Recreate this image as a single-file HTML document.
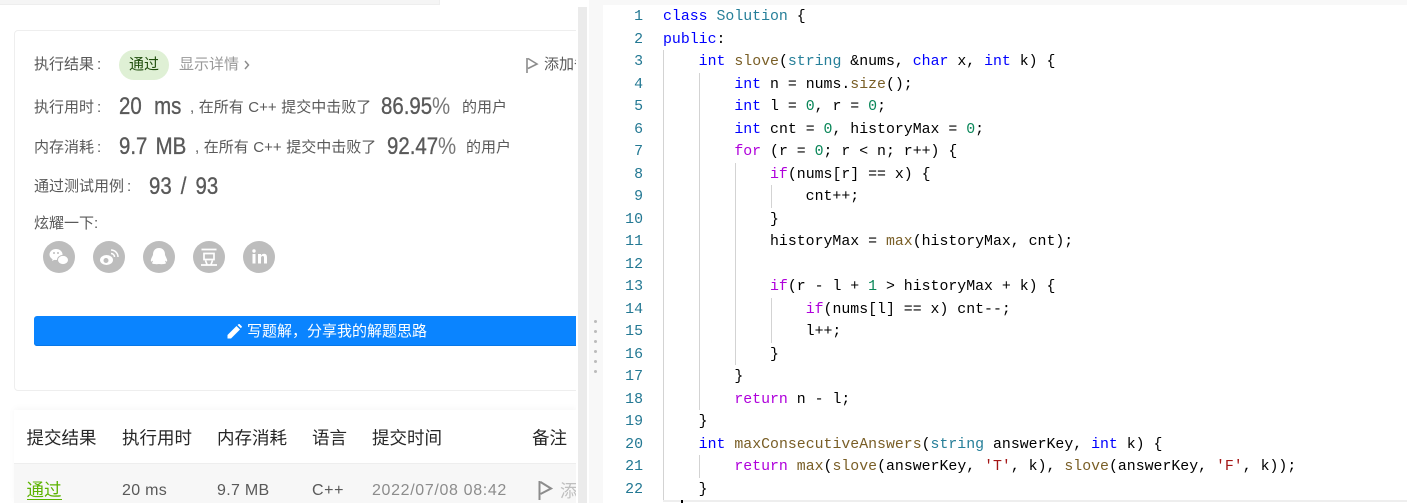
<!DOCTYPE html>
<html><head><meta charset="utf-8"><style>
html,body{margin:0;padding:0;background:#fff;}
body{width:1407px;height:503px;overflow:hidden;position:relative;font-family:"Liberation Sans","Noto Sans CJK SC",sans-serif;}
.a{position:absolute;white-space:pre;}
#left{position:absolute;left:0;top:0;width:576px;height:503px;overflow:hidden;}
.l{font-size:15px;color:#595959;line-height:20px;word-spacing:.4px;}
.n{font-size:24px;color:#595959;line-height:28px;transform:scaleX(.85);transform-origin:0 50%;-webkit-text-stroke:.35px #595959;}
.n i{font-style:normal;color:#777;-webkit-text-stroke:0;}
.h{font-size:17.5px;color:#262626;line-height:26px;}
.r{font-size:16px;color:#595959;line-height:24px;letter-spacing:.3px;}
.c{position:absolute;left:663px;margin-top:1px;font:14.87px/22px "Liberation Mono",monospace;color:#000;white-space:pre;}
.g{position:absolute;left:627px;margin-top:1px;width:16px;text-align:right;font:14.87px/22px "Liberation Mono",monospace;color:#237893;}
.i{position:absolute;width:1px;background:#d3d3d3;}
b{font-weight:normal;}
.k{color:#00f}.t{color:#267f99}.f{color:#795e26}.p{color:#af00db}.o{color:#098658}.s{color:#a31515}
.ic{position:absolute;top:241px;width:32px;height:32px;border-radius:50%;background:#bdbdbd;}
</style></head><body>
<div id="left">
<div class="a" style="left:0;top:0;width:439px;height:4px;background:#f5f5f5;border-right:1px solid #eee;border-bottom:1px solid #eee"></div>
<div class="a" style="left:14px;top:30px;width:600px;height:359px;border:1px solid #eee;border-radius:4px;box-sizing:content-box"></div>

<div class="a l" style="left:34px;top:55px">执行结果<span style="margin-left:3px">:</span></div>
<div class="a" style="left:119px;top:50px;width:50px;height:30px;border-radius:15px;background:#dff0d5"></div>
<div class="a" style="left:129px;top:55px;font-size:15px;line-height:20px;color:#1f4d0c">通过</div>
<div class="a" style="left:179px;top:55px;font-size:15px;line-height:20px;color:#999">显示详情</div>
<svg class="a" style="left:244px;top:60px" width="6" height="10" viewBox="0 0 6 10"><path d="M1 1L4.500 5L1 9" fill="none" stroke="#8c8c8c" stroke-width="1.500"/></svg>
<svg class="a" style="left:526px;top:57px" width="13" height="16" viewBox="0 0 13 16"><path d="M1 1V16M2 1.500L11 7L2 11.500" fill="none" stroke="#8c8c8c" stroke-width="1.600"/></svg>
<div class="a l" style="left:544px;top:55px">添加备注</div>

<div class="a l" style="left:34px;top:98px">执行用时<span style="margin-left:3px">:</span></div>
<div class="a n" style="left:119px;top:93px;word-spacing:8px">20 ms</div>
<div class="a l" style="left:190px;top:98px">, 在所有 C++ 提交中击败了</div>
<div class="a n" style="left:381px;top:93px">86.95<i>%</i></div>
<div class="a l" style="left:462px;top:98px">的用户</div>

<div class="a l" style="left:34px;top:138px">内存消耗<span style="margin-left:3px">:</span></div>
<div class="a n" style="left:119px;top:133px;word-spacing:3px">9.7 MB</div>
<div class="a l" style="left:195px;top:138px">, 在所有 C++ 提交中击败了</div>
<div class="a n" style="left:387px;top:133px">92.47<i>%</i></div>
<div class="a l" style="left:466px;top:138px">的用户</div>

<div class="a l" style="left:34px;top:177px">通过测试用例<span style="margin-left:3px">:</span></div>
<div class="a n" style="left:149px;top:173px;word-spacing:4px">93 / 93</div>
<div class="a l" style="left:34px;top:214px">炫耀一下:</div>

<div class="ic" style="left:43px"><svg width="32" height="32" viewBox="0 0 32 32"><ellipse cx="13" cy="13.500" rx="6.500" ry="5.500" fill="#fff"/><path d="M10 17l-1 3 4-2z" fill="#fff"/><ellipse cx="20" cy="19" rx="5.500" ry="4.600" fill="#fff" stroke="#bdbdbd"/><circle cx="11" cy="12" r="1" fill="#bdbdbd"/><circle cx="15" cy="12" r="1" fill="#bdbdbd"/></svg></div>
<div class="ic" style="left:93px"><svg width="32" height="32" viewBox="0 0 32 32"><ellipse cx="13.500" cy="19" rx="6.500" ry="5" fill="#fff"/><circle cx="13" cy="19.500" r="2.500" fill="#bdbdbd"/><path d="M18 9a7 7 0 0 1 7 7M18 12.500a3.500 3.500 0 0 1 3.500 3.500" fill="none" stroke="#fff" stroke-width="1.500"/></svg></div>
<div class="ic" style="left:143px"><svg width="32" height="32" viewBox="0 0 32 32"><path d="M16 7c4 0 6 3 6 6.500 0 1 1 2 2 5 .6 2.200-.5 2.800-2 1 0 1.500 1 2 1 2.500 0 1-4 1.500-7 1-3 .5-7 0-7-1 0-.5 1-1 1-2.500-1.500 1.800-2.600 1.200-2-1 1-3 2-4 2-5C10 10 12 7 16 7z" fill="#fff"/></svg></div>
<div class="ic" style="left:193px"><svg width="32" height="32" viewBox="0 0 32 32"><path d="M8.500 8.500h15M11 12.500h10v6H11zM12.500 19.500l1.500 4M19.500 19.500l-1.500 4M8 24h16" fill="none" stroke="#fff" stroke-width="1.700"/></svg></div>
<div class="ic" style="left:243px"><svg width="32" height="32" viewBox="0 0 32 32"><rect x="9.500" y="13" width="3" height="9.500" fill="#fff"/><circle cx="11" cy="10" r="1.700" fill="#fff"/><path d="M15 13h3v1.500c1-1.200 2-1.700 3-1.700 2.500 0 3 1.700 3 4v5.700h-3v-5.500c0-1.200-.3-2-1.300-2-1.200 0-1.700.9-1.700 2v5.500h-3z" fill="#fff"/></svg></div>

<div class="a" style="left:34px;top:316px;width:600px;height:30px;background:#0a84ff;border-radius:3px;box-shadow:inset 0 -1px 0 #0877e6"></div>
<svg class="a" style="left:227px;top:324px" width="15" height="15" viewBox="0 0 15 15"><path d="M0.500 14.500V11L9.500 2l3.500 3.500-9 9zM10.500 1l1-.8c.4-.3.900-.3 1.200 0l2 2c.3.300.3.800 0 1.100l-.8 1z" fill="#fff"/></svg>
<div class="a" style="left:247px;top:322px;font-size:15px;line-height:20px;color:#fff">写题解，分享我的解题思路</div>

<div class="a" style="left:14px;top:410px;width:563px;height:93px;background:#fff;box-shadow:0 -2px 6px rgba(0,0,0,.03)"></div>
<div class="a h" style="left:26.500px;top:425px">提交结果</div>
<div class="a h" style="left:122px;top:425px">执行用时</div>
<div class="a h" style="left:217px;top:425px">内存消耗</div>
<div class="a h" style="left:312px;top:425px">语言</div>
<div class="a h" style="left:372px;top:425px">提交时间</div>
<div class="a h" style="left:532px;top:425px">备注</div>
<div class="a" style="left:14px;top:463px;width:563px;height:40px;background:#f7f7f7;border-top:1px solid #eee;box-sizing:border-box"></div>
<div class="a" style="left:26.500px;top:478px;font-size:17.500px;line-height:24px;color:#5cb300;border-bottom:1px solid #5cb300;height:21px">通过</div>
<div class="a r" style="left:122px;top:479px">20 ms</div>
<div class="a r" style="left:217px;top:479px">9.7 MB</div>
<div class="a r" style="left:312px;top:479px;letter-spacing:.6px">C++</div>
<div class="a r" style="left:372px;top:479px;color:#8c8c8c;letter-spacing:.65px">2022/07/08 08:42</div>
<svg class="a" style="left:538px;top:481px" width="15" height="19" viewBox="0 0 15 19"><path d="M1.500 0V19M2.500 1L13 7.500 2.500 13" fill="none" stroke="#8c8c8c" stroke-width="2"/></svg>
<div class="a" style="left:560px;top:479px;font-size:17.500px;line-height:24px;color:#bfbfbf">添加备注</div>
</div>

<div class="a" style="left:578px;top:7px;width:9px;height:496px;background:#ebebeb"></div>
<div class="a" style="left:589px;top:0;width:14px;height:503px;background:#f8f8f8"></div>
<div class="a" style="left:603px;top:0;width:804px;height:5px;background:#f8f8f8"></div>
<div class="a" style="left:594px;top:320px;width:3px;height:3px;border-radius:50%;background:#bbb;box-shadow:0 10px #bbb,0 20px #bbb,0 30px #bbb,0 40px #bbb,0 50px #bbb"></div>

<div class="i" style="left:663px;top:50px;height:451px"></div>
<div class="i" style="left:699px;top:73px;height:337px"></div>
<div class="i" style="left:699px;top:455px;height:23px"></div>
<div class="i" style="left:735px;top:163px;height:202px"></div>
<div class="i" style="left:771px;top:185px;height:23px"></div>
<div class="i" style="left:771px;top:298px;height:45px"></div>
<div class="a" style="left:663px;top:500px;width:744px;height:2px;background:#eee"></div>
<div class="a" style="left:681px;top:500px;width:2px;height:3px;background:#000"></div>

<div class="g" style="top:5px">1</div><div class="c" style="top:5px"><b class="k">class</b> <b class="t">Solution</b> {</div>
<div class="g" style="top:28px">2</div><div class="c" style="top:28px"><b class="k">public</b>:</div>
<div class="g" style="top:50px">3</div><div class="c" style="top:50px">    <b class="k">int</b> <b class="f">slove</b>(<b class="t">string</b> &amp;nums, <b class="k">char</b> x, <b class="k">int</b> k) {</div>
<div class="g" style="top:73px">4</div><div class="c" style="top:73px">        <b class="k">int</b> n = nums.<b class="f">size</b>();</div>
<div class="g" style="top:95px">5</div><div class="c" style="top:95px">        <b class="k">int</b> l = <b class="o">0</b>, r = <b class="o">0</b>;</div>
<div class="g" style="top:118px">6</div><div class="c" style="top:118px">        <b class="k">int</b> cnt = <b class="o">0</b>, historyMax = <b class="o">0</b>;</div>
<div class="g" style="top:140px">7</div><div class="c" style="top:140px">        <b class="p">for</b> (r = <b class="o">0</b>; r &lt; n; r++) {</div>
<div class="g" style="top:163px">8</div><div class="c" style="top:163px">            <b class="p">if</b>(nums[r] == x) {</div>
<div class="g" style="top:185px">9</div><div class="c" style="top:185px">                cnt++;</div>
<div class="g" style="top:208px;left:619px;width:24px">10</div><div class="c" style="top:208px">            }</div>
<div class="g" style="top:230px;left:619px;width:24px">11</div><div class="c" style="top:230px">            historyMax = <b class="f">max</b>(historyMax, cnt);</div>
<div class="g" style="top:253px;left:619px;width:24px">12</div>
<div class="g" style="top:275px;left:619px;width:24px">13</div><div class="c" style="top:275px">            <b class="p">if</b>(r - l + <b class="o">1</b> &gt; historyMax + k) {</div>
<div class="g" style="top:298px;left:619px;width:24px">14</div><div class="c" style="top:298px">                <b class="p">if</b>(nums[l] == x) cnt--;</div>
<div class="g" style="top:320px;left:619px;width:24px">15</div><div class="c" style="top:320px">                l++;</div>
<div class="g" style="top:343px;left:619px;width:24px">16</div><div class="c" style="top:343px">            }</div>
<div class="g" style="top:365px;left:619px;width:24px">17</div><div class="c" style="top:365px">        }</div>
<div class="g" style="top:388px;left:619px;width:24px">18</div><div class="c" style="top:388px">        <b class="p">return</b> n - l;</div>
<div class="g" style="top:410px;left:619px;width:24px">19</div><div class="c" style="top:410px">    }</div>
<div class="g" style="top:433px;left:619px;width:24px">20</div><div class="c" style="top:433px">    <b class="k">int</b> <b class="f">maxConsecutiveAnswers</b>(<b class="t">string</b> answerKey, <b class="k">int</b> k) {</div>
<div class="g" style="top:455px;left:619px;width:24px">21</div><div class="c" style="top:455px">        <b class="p">return</b> <b class="f">max</b>(<b class="f">slove</b>(answerKey, <b class="s">'T'</b>, k), <b class="f">slove</b>(answerKey, <b class="s">'F'</b>, k));</div>
<div class="g" style="top:478px;left:619px;width:24px">22</div><div class="c" style="top:478px">    }</div>
</body></html>
